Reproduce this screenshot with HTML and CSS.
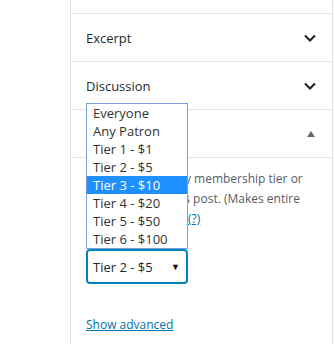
FILE: index.html
```html
<!DOCTYPE html>
<html lang="en">
<head>
    <meta charset="UTF-8">
    <meta name="viewport" content="width=device-width, initial-scale=1.0">
    <title>Post settings</title>
    <link rel="stylesheet" href="styles.css">
</head>
<body>

<!-- Sidebar with collapsible panels -->
<div class="sidebar">
    <div class="panel-top"></div>

    <div class="panel">
        <div class="panel-header">
            <span class="panel-title">Excerpt</span>
            <svg class="chevron" width="12" height="8" viewBox="0 0 12 8"><path d="M1 1.5l5 5 5-5" fill="none" stroke="#1e1e1e" stroke-width="2"/></svg>
        </div>
    </div>

    <div class="panel">
        <div class="panel-header">
            <span class="panel-title">Discussion</span>
            <svg class="chevron" width="12" height="8" viewBox="0 0 12 8"><path d="M1 1.5l5 5 5-5" fill="none" stroke="#1e1e1e" stroke-width="2"/></svg>
        </div>
    </div>

    <!-- Open panel -->
    <div class="panel">
        <div class="panel-header open">
            <span class="panel-title">Patreon Level</span>
            <span class="caret"></span>
        </div>
        <div class="panel-body">
            <p class="help">Limit access to any membership tier or<br>pledge to view this post. (Makes entire<br>post patron only). <a href="#">(?)</a></p>

            <div class="select-wrap">
                <!-- open list of the select -->
                <ul class="select-list">
                    <li>Everyone</li>
                    <li>Any Patron</li>
                    <li>Tier 1 - $1</li>
                    <li>Tier 2 - $5</li>
                    <li class="active">Tier 3 - $10</li>
                    <li>Tier 4 - $20</li>
                    <li>Tier 5 - $50</li>
                    <li>Tier 6 - $100</li>
                </ul>
                <div class="select-box">
                    <span>Tier 2 - $5</span>
                    <span class="select-arrow">&#9660;</span>
                </div>
            </div>

            <a class="advanced" href="#">Show advanced</a>
        </div>
    </div>
</div>

</body>
</html>
```

FILE: styles.css
```css
/* Page basics */
body {
    margin: 0;
    background: #fff;
    font-family: "Open Sans", "Noto Sans", sans-serif;
    font-size: 13px;
    color: #555d66;
}

/* Sidebar column */
.sidebar {
    margin-left: 70px;
    width: 261px;
    height: 344px;
    border-left: 1px solid #e2e4e7;
    border-right: 1px solid #e2e4e7;
}
.panel-top {
    height: 13px;
}
.panel {
    border-top: 1px solid #e2e4e7;
}

/* Panel headers */
.panel-header {
    height: 47px;
    display: flex;
    align-items: center;
    justify-content: space-between;
    padding: 0 16px 0 15px;
}
.panel-header.open {
    border-bottom: 1px solid #e2e4e7;
}
.panel-title {
    font-size: 13px;
    font-weight: 500;
    color: #23282d;
}
.caret {
    width: 0;
    height: 0;
    border-left: 4px solid transparent;
    border-right: 4px solid transparent;
    border-bottom: 6px solid #666;
    margin-right: 1px;
}

/* Panel content */
.panel-body {
    padding: 11px 15px 0 15px;
}
.help {
    margin: 0;
    font-size: 12px;
    line-height: 20px;
    white-space: nowrap;
    overflow: hidden;
}
.help a {
    color: #0073aa;
}

/* Select with its open list */
.select-wrap {
    position: relative;
    width: 102px;
    margin-top: 20px;
}
.select-box {
    box-sizing: border-box;
    height: 35px;
    border: 2px solid #0085ba;
    border-radius: 4px;
    display: flex;
    align-items: center;
    justify-content: space-between;
    padding: 0 6px 0 5px;
    color: #23282d;
}
.select-arrow {
    font-size: 9px;
    color: #111;
}
.select-list {
    position: absolute;
    left: 0;
    bottom: 100%;
    width: 100%;
    box-sizing: border-box;
    margin: 0;
    padding: 0;
    list-style: none;
    background: #fff;
    border: 1px solid #7a9fd9;
}
.select-list li {
    height: 18px;
    line-height: 18px;
    padding-left: 6px;
    color: #333;
}
.select-list li.active {
    background: #1e90ff;
    color: #fff;
}

/* Advanced link */
.advanced {
    display: inline-block;
    margin-top: 31px;
    font-size: 12px;
    line-height: 20px;
    color: #0073aa;
}
```
